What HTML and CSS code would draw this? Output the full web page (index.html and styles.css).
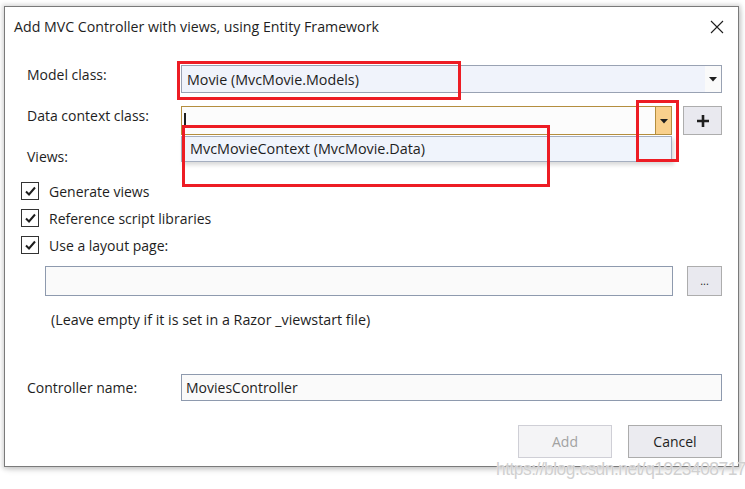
FILE: index.html
```html
<!DOCTYPE html>
<html>
<head>
<meta charset="utf-8">
<link rel="stylesheet" href="styles.css">
</head>
<body>
<div class="dialog">
  <div class="titlebar">
    <span class="title">Add MVC Controller with views, using Entity Framework</span>
    <svg class="close" width="14" height="14" viewBox="0 0 14 14"><path d="M1 1L13 13M13 1L1 13" stroke="#1e1e1e" stroke-width="1.1" fill="none"/></svg>
  </div>
  <div class="form">
    <div class="row row-model">
      <label class="lbl">Model class:</label>
      <div class="combo combo-model">
        <span class="combo-text">Movie (MvcMovie.Models)</span>
        <span class="combo-btn"><svg width="8" height="5" viewBox="0 0 8 5"><path d="M0 0H8L4 4.5Z" fill="#1e1e1e"/></svg></span>
      </div>
    </div>
    <div class="row row-ctx">
      <label class="lbl">Data context class:</label>
      <div class="ctx-field">
        <div class="combo combo-ctx">
          <span class="caret"></span>
          <span class="combo-btn btn-hot"><svg width="8" height="5" viewBox="0 0 8 5"><path d="M0 0H8L4 4.5Z" fill="#1e1e1e"/></svg></span>
          <div class="droplist">MvcMovieContext (MvcMovie.Data)</div>
        </div>
        <button class="plus"><svg width="14" height="14" viewBox="0 0 14 14"><path d="M7 1V13M1 7H13" stroke="#1e1e1e" stroke-width="2.6" fill="none"/></svg></button>
      </div>
    </div>
    <div class="views-lbl">Views:</div>
    <div class="checks">
      <div class="check"><span class="box"><svg width="13" height="13" viewBox="0 0 13 13"><path d="M2 6.5L5 9.5L11 2.5" stroke="#1e1e1e" stroke-width="2" fill="none"/></svg></span>Generate views</div>
      <div class="check"><span class="box"><svg width="13" height="13" viewBox="0 0 13 13"><path d="M2 6.5L5 9.5L11 2.5" stroke="#1e1e1e" stroke-width="2" fill="none"/></svg></span>Reference script libraries</div>
      <div class="check"><span class="box"><svg width="13" height="13" viewBox="0 0 13 13"><path d="M2 6.5L5 9.5L11 2.5" stroke="#1e1e1e" stroke-width="2" fill="none"/></svg></span>Use a layout page:</div>
    </div>
    <div class="layout-row">
      <div class="input layout-input"></div>
      <button class="dots">...</button>
    </div>
    <div class="hint">(Leave empty if it is set in a Razor _viewstart file)</div>
    <div class="row row-name">
      <label class="lbl">Controller name:</label>
      <div class="input name-input">MoviesController</div>
    </div>
    <div class="actions">
      <button class="btn btn-disabled">Add</button>
      <button class="btn">Cancel</button>
    </div>
  </div>
  <div class="mark mark-model"></div>
  <div class="mark mark-item"></div>
  <div class="mark mark-btn"></div>
</div>
<div class="watermark">https://blog.csdn.net/q1923408717</div>
</body>
</html>
```
FILE: styles.css
```css
* { box-sizing: border-box; }
html, body { margin: 0; padding: 0; }
body {
  width: 745px;
  height: 489px;
  overflow: hidden;
  background: #ffffff;
  padding: 6px 0 0 4px;
  font-family: "Open Sans", "Noto Sans", sans-serif;
  font-size: 14px;
  color: #1e1e1e;
  position: relative;
}
.dialog {
  position: relative;
  width: 735px;
  height: 461px;
  background: #fff;
  border: 1px solid #7a7a7a;
  box-shadow: 0 0 4px 2px rgba(0,0,0,0.13), 2px 3px 6px rgba(0,0,0,0.12);
}
.titlebar {
  height: 40px;
  display: flex;
  align-items: center;
  justify-content: space-between;
  padding: 0 14px 0 9px;
}
.title {
  font-size: 14.2px;
  position: relative;
  top: -1px;
}
.close { margin-top: 0px; }
.form {
  padding: 18px 16px 0 16px;
  display: flex;
  flex-direction: column;
}
.row {
  display: flex;
  align-items: flex-start;
}
.lbl {
  width: 160px;
  padding-left: 6px;
  flex: none;
  line-height: 20px;
}
.combo {
  position: relative;
  height: 28px;
  flex: 1;
  display: flex;
  align-items: center;
  border: 1px solid #99a2b3;
  background: #f0f3fb;
}
.combo-text {
  padding-left: 5px;
  flex: 1;
  font-size: 14.3px;
}
.combo-btn {
  width: 16px;
  height: 100%;
  display: flex;
  align-items: center;
  justify-content: center;
  background: #fafafa;
}
.combo-btn svg { margin-top: 1px; }
.row-ctx { margin-top: 13px; }
.ctx-field {
  flex: 1;
  display: flex;
  gap: 11px;
}
.combo-ctx {
  height: 29px;
  border-color: #b48e3f;
  background: #fcfcfc;
}
.caret {
  width: 1.5px;
  height: 15px;
  background: #1e1e1e;
  margin-left: 2px;
  flex: none;
}
.combo-ctx .combo-btn {
  margin-left: auto;
}
.btn-hot {
  background: #f9d08c;
  border-left: 1px solid #b48e3f;
}
.droplist {
  position: absolute;
  left: -1px;
  right: -1px;
  top: 29px;
  height: 26px;
  background: #f0f4fc;
  border: 1px solid #a5aebf;
  box-shadow: 2px 3px 4px rgba(0,0,0,0.15);
  padding-left: 8px;
  line-height: 23px;
  font-size: 14.4px;
  z-index: 2;
}
.plus {
  width: 39px;
  height: 29px;
  flex: none;
  border: 1px solid #adadad;
  background: #e9e9ef;
  display: flex;
  align-items: center;
  justify-content: center;
  padding: 0;
}
.views-lbl {
  margin-top: 12px;
  padding-left: 6px;
  line-height: 20px;
}
.checks {
  margin-top: 15px;
  display: flex;
  flex-direction: column;
  gap: 9px;
}
.check {
  display: flex;
  align-items: center;
  height: 18px;
  font-size: 14px;
}
.box {
  width: 18px;
  height: 18px;
  border: 1px solid #333;
  background: #fff;
  margin-right: 10px;
  display: flex;
  align-items: center;
  justify-content: center;
}
.layout-row {
  margin-top: 12px;
  display: flex;
  padding-left: 24px;
  gap: 14px;
}
.input {
  border: 1px solid #8e9aae;
  background: #fafafa;
}
.layout-input {
  width: 628px;
  height: 30px;
}
.dots {
  width: 35px;
  height: 30px;
  border: 1px solid #adadad;
  background: #e9e9ef;
  padding: 0;
  font-family: "Open Sans", sans-serif;
  font-size: 11px;
  color: #1e1e1e;
  line-height: 20px;
}
.hint {
  margin-top: 14px;
  padding-left: 30px;
  line-height: 20px;
  font-size: 14.3px;
}
.row-name {
  margin-top: 44px;
  align-items: center;
}
.name-input {
  flex: 1;
  height: 27px;
  padding-left: 4px;
  line-height: 25px;
  font-size: 14px;
}
.actions {
  margin-top: 24px;
  display: flex;
  justify-content: flex-end;
  gap: 16px;
}
.btn {
  width: 94px;
  height: 33px;
  border: 1px solid #acacac;
  background: #ebebf0;
  font-family: "Open Sans", sans-serif;
  font-size: 14px;
  color: #1e1e1e;
  padding: 0;
}
.btn-disabled {
  background: #f4f4f6;
  border-color: #cfcfd6;
  color: #a2a2a2;
}
.mark {
  position: absolute;
  border: 3px solid #ed1c24;
  z-index: 5;
}
.mark-model { left: 172px; top: 54px; width: 284px; height: 39px; }
.mark-item { left: 177px; top: 118px; width: 368px; height: 62px; }
.mark-btn { left: 631px; top: 93px; width: 43px; height: 62px; }
.watermark {
  position: absolute;
  left: 496px;
  top: 458px;
  font-family: "Liberation Sans", Arial, sans-serif;
  font-size: 19px;
  letter-spacing: -0.6px;
  color: #d0d0d0;
  text-shadow: 0 0 1px #fff;
  transform: scaleX(0.92);
  transform-origin: left;
  white-space: nowrap;
}
```
